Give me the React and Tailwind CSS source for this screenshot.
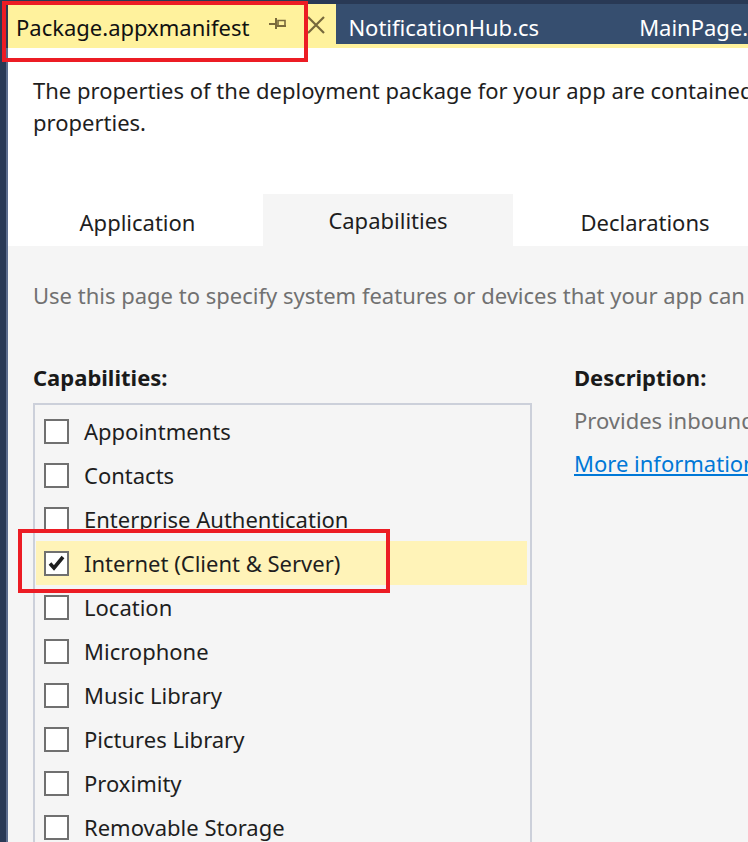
import { useState } from "react";

const capabilities = [
  "Appointments",
  "Contacts",
  "Enterprise Authentication",
  "Internet (Client & Server)",
  "Location",
  "Microphone",
  "Music Library",
  "Pictures Library",
  "Proximity",
  "Removable Storage",
];

function PinIcon() {
  return (
    <svg width="18" height="12" viewBox="0 0 18 12" className="text-[#7a6a3c]">
      <rect x="0" y="5" width="6" height="2" fill="currentColor" />
      <rect x="6" y="0" width="2" height="11" fill="currentColor" />
      <path d="M9 2.5h7v5.5h-7z" fill="none" stroke="currentColor" strokeWidth="1.6" />
      <rect x="8" y="7" width="9" height="2" fill="currentColor" />
    </svg>
  );
}

function CloseIcon() {
  return (
    <svg width="20" height="18" viewBox="0 0 20 18">
      <path d="M2 1L18 17M18 1L2 17" stroke="#76683c" strokeWidth="2.2" />
    </svg>
  );
}

function Checkbox({ checked }) {
  return (
    <div className="w-[25px] h-[25px] border-2 border-[#707070] bg-white flex items-center justify-center shrink-0">
      {checked && (
        <svg width="19" height="17" viewBox="0 0 19 17">
          <path d="M3 8.5l4 4.5L16 2" fill="none" stroke="#1e1e1e" strokeWidth="3.6" />
        </svg>
      )}
    </div>
  );
}

export default function App() {
  const [checked, setChecked] = useState({ "Internet (Client & Server)": true });

  return (
    <div
      className="relative w-[748px] h-[842px] overflow-hidden flex bg-[#293955]"
      style={{ fontFamily: '"Noto Sans", "Open Sans", sans-serif' }}
    >
      {/* left dock edge */}
      <div className="w-[6px] shrink-0 bg-[#293955]" />
      <div className="w-[2px] shrink-0 flex flex-col">
        <div className="h-[48px] shrink-0 bg-[#293955]" />
        <div className="flex-1 bg-[#5c6d8e]" />
      </div>

      <div className="flex-1 flex flex-col min-w-0 overflow-hidden">
        {/* document tabs */}
        <div className="h-[4px] shrink-0 bg-[#293955]" />
        <div className="h-[40px] shrink-0 flex items-stretch whitespace-nowrap text-[22px] leading-none">
          <div className="bg-[#fff29d] flex items-center pl-[8px] pt-[5px] text-[#111] shrink-0">
            <span>Package.appxmanifest</span>
            <span className="ml-[20px] -mt-[5px]"><PinIcon /></span>
            <span className="ml-[19px] mr-[10px] -mt-[3px]"><CloseIcon /></span>
          </div>
          <div className="flex-1 bg-[#364e6f] flex items-center pt-[5px] text-white">
            <span className="pl-[12px]">NotificationHub.cs</span>
            <span className="pl-[100px]">MainPage.xaml.cs</span>
          </div>
        </div>
        <div className="h-[4px] shrink-0 bg-[#fff29d]" />

        {/* manifest designer */}
        <div className="flex-1 bg-white flex flex-col whitespace-nowrap text-[#1e1e1e]">
          <div className="shrink-0 pl-[25px] pt-[26px] text-[22px] leading-[32px]">
            <p>The properties of the deployment package for your app are contained in</p>
            <p>properties.</p>
          </div>

          <div className="shrink-0 mt-[56px] pl-[4px] flex h-[52px] text-[22px]">
            <div className="w-[251px] shrink-0 flex items-center justify-center pt-[5px]">Application</div>
            <div className="w-[250px] shrink-0 bg-[#f5f5f5] flex items-center justify-center">Capabilities</div>
            <div className="w-[264px] shrink-0 flex items-center justify-center pt-[5px]">Declarations</div>
          </div>

          <div className="flex-1 bg-[#f5f5f5] pl-[25px] pt-[34px]">
            <p className="text-[22px] leading-[30px] text-[#717171]">
              Use this page to specify system features or devices that your app can use.
            </p>

            <div className="mt-[52px] flex">
              <div className="w-[541px] shrink-0">
                <p className="text-[22px] leading-[30px] font-bold text-[#1a1a1a]">Capabilities:</p>
                <div className="mt-[11px] w-[499px] border-2 border-[#ccd0da] px-[1px] pt-[4px]">
                  {capabilities.map((c) => (
                    <div
                      key={c}
                      onClick={() => setChecked({ ...checked, [c]: !checked[c] })}
                      className={`h-[44px] flex items-center gap-[15px] pl-[8px] mr-[2px] text-[22px] ${
                        c === "Internet (Client & Server)" ? "bg-[#fff3b8]" : ""
                      }`}
                    >
                      <Checkbox checked={!!checked[c]} />
                      <span>{c}</span>
                    </div>
                  ))}
                </div>
              </div>
              <div className="text-[22px]">
                <p className="leading-[30px] font-bold text-[#1a1a1a]">Description:</p>
                <p className="mt-[13px] leading-[30px] text-[#717171]">Provides inbound and outbound access to the Internet</p>
                <p className="mt-[13px] leading-[30px] text-[#0078d7] underline">More information</p>
              </div>
            </div>
          </div>
        </div>
      </div>

      {/* callout boxes */}
      <div className="absolute left-[2px] top-[1px] w-[306px] h-[61px] border-4 border-[#ec1c24]" />
      <div className="absolute left-[18px] top-[529px] w-[372px] h-[64px] border-4 border-[#ec1c24]" />
    </div>
  );
}
